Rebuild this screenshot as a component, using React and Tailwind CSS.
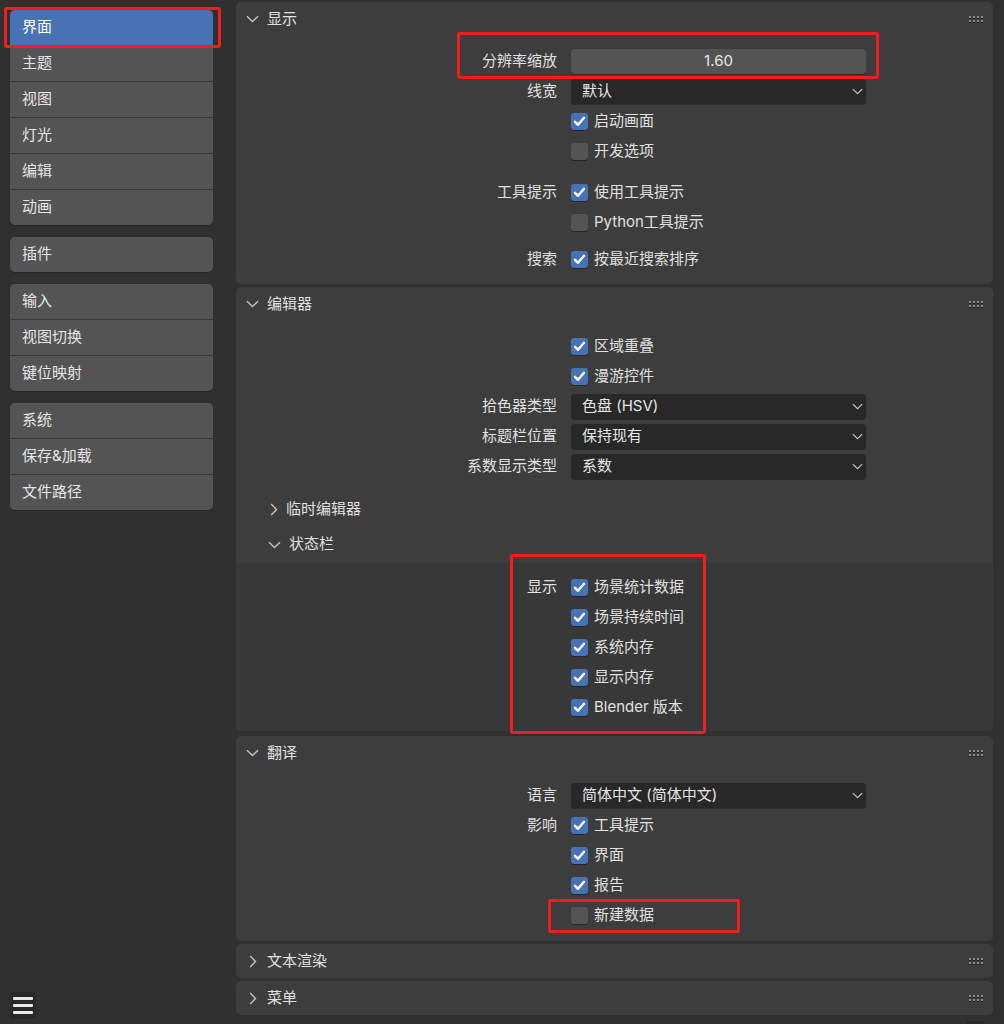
import React from 'react'

const font = { fontFamily: 'Inter, "Noto Sans CJK SC", sans-serif' }

const ChevronDown = ({ className }) => (
    <svg className={className} width="13" height="8" viewBox="0 0 13 8" fill="none">
        <path d="M1 1.2 L6.5 6.5 L12 1.2" stroke="#c4c4c4" strokeWidth="1.4" />
    </svg>
)

const ChevronRight = ({ className }) => (
    <svg className={className} width="8" height="13" viewBox="0 0 8 13" fill="none">
        <path d="M1.2 1 L6.5 6.5 L1.2 12" stroke="#c4c4c4" strokeWidth="1.4" />
    </svg>
)

const Grip = () => (
    <div className="grid grid-cols-4 gap-x-[2px] gap-y-[2px]">
        {[0, 1, 2, 3, 4, 5, 6, 7].map(i => (
            <span key={i} className="block w-[2px] h-[2px] bg-[#8c8c8c] shadow-[0_1px_0_#1e1e1e]"></span>
        ))}
    </div>
)

const Check = ({ on }) => (
    <span className={on ? "w-[17px] h-[17px] rounded-[3px] bg-[#4772b3] flex items-center justify-center shadow-[0_1px_0_#262626]" : "w-[17px] h-[17px] rounded-[3px] bg-[#545454] shadow-[0_1px_0_#262626]"}>
        {on && (
            <svg width="13" height="13" viewBox="0 0 13 13" fill="none">
                <path d="M2 6.8 L5 9.8 L11 2.8" stroke="#ffffff" strokeWidth="2.4" strokeLinecap="round" strokeLinejoin="round" />
            </svg>
        )}
    </span>
)

const Row = ({ label, children }) => (
    <div className="flex items-center h-[30px]">
        <div className="w-[321px] shrink-0 text-right text-[#e0e0e0]">{label}</div>
        <div className="ml-[14px] w-[295px]">{children}</div>
    </div>
)

const CheckRow = ({ label, text, on }) => (
    <Row label={label}>
        <div className="flex items-center gap-[6px]">
            <Check on={on} />
            <span className="text-[#e0e0e0]">{text}</span>
        </div>
    </Row>
)

const Dropdown = ({ label, value }) => (
    <Row label={label}>
        <div className="h-[25px] rounded-[4px] bg-[#282828] flex items-center justify-between pl-[11px] pr-[3px] text-[#e6e6e6] shadow-[0_1px_0_#2a2a2a]">
            <span>{value}</span>
            <ChevronDown className="w-[11px] h-[7px]" />
        </div>
    </Row>
)

const PanelHeader = ({ title, open }) => (
    <div className="h-[34px] flex items-center pl-[10px] pr-[10px]">
        {open ? <ChevronDown className="w-[13px] h-[8px] mr-[8px]" /> : <ChevronRight className="w-[8px] h-[13px] ml-[3px] mr-[10px]" />}
        <span className="text-[#e0e0e0]">{title}</span>
        <div className="ml-auto">
            <Grip />
        </div>
    </div>
)

const SubHeader = ({ title, open }) => (
    <div className="h-[35px] flex items-center pl-[32px]">
        {open ? <ChevronDown className="w-[13px] h-[8px] mr-[8px]" /> : <ChevronRight className="w-[8px] h-[13px] ml-[2px] mr-[8px]" />}
        <span className="text-[#e0e0e0]">{title}</span>
    </div>
)

const sideGroups = [
    ["界面", "主题", "视图", "灯光", "编辑", "动画"],
    ["插件"],
    ["输入", "视图切换", "键位映射"],
    ["系统", "保存&加载", "文件路径"],
]

const RedBox = ({ className }) => (
    <div className={"absolute border-[3px] border-[#f01e1e] rounded-[3px] pointer-events-none " + className}></div>
)

const App = () => {
    return (
        <div className="relative w-[1004px] h-[1024px] bg-[#303030] flex text-[15px] overflow-hidden" style={font}>
            <div className="w-[236px] shrink-0 flex flex-col pl-[10px] pr-[23px] pt-[10px]">
                {sideGroups.map((group, gi) => (
                    <div key={gi} className={gi === 0 ? "rounded-[5px] overflow-hidden bg-[#3a3a3a] flex flex-col gap-[1px] shadow-[0_1px_0_#262626]" : "mt-[12px] rounded-[5px] overflow-hidden bg-[#3a3a3a] flex flex-col gap-[1px] shadow-[0_1px_0_#262626]"}>
                        {group.map(item => (
                            <div key={item} className={item === "界面" ? "h-[35px] flex items-center pl-[12px] bg-[#4772b3] text-white" : "h-[35px] flex items-center pl-[12px] bg-[#545454] text-[#e6e6e6]"}>
                                {item}
                            </div>
                        ))}
                    </div>
                ))}
                <div className="mt-auto mb-[5px] w-[26px] h-[27px] rounded-[4px] bg-[#282828] flex flex-col items-center justify-center gap-[4px]">
                    <span className="block w-[20px] h-[3px] rounded-[1px] bg-[#e8e8e8]"></span>
                    <span className="block w-[20px] h-[3px] rounded-[1px] bg-[#e8e8e8]"></span>
                    <span className="block w-[20px] h-[3px] rounded-[1px] bg-[#e8e8e8]"></span>
                </div>
            </div>

            <div className="flex-1 pr-[11px] pt-[2px] flex flex-col gap-[3px]">
                {/* 显示 */}
                <div className="shrink-0 rounded-[5px] bg-[#3d3d3d] pb-[10px]">
                    <PanelHeader title="显示" open />
                    <div className="pt-[10px]">
                        <Row label="分辨率缩放">
                            <div className="h-[25px] rounded-[4px] bg-[#545454] flex items-center justify-center text-[#e6e6e6] shadow-[0_1px_0_#2a2a2a]">1.60</div>
                        </Row>
                        <Dropdown label="线宽" value="默认" />
                        <CheckRow text="启动画面" on />
                        <CheckRow text="开发选项" />
                        <div className="h-[11px]"></div>
                        <CheckRow label="工具提示" text="使用工具提示" on />
                        <CheckRow text="Python工具提示" />
                        <div className="h-[7px]"></div>
                        <CheckRow label="搜索" text="按最近搜索排序" on />
                    </div>
                </div>

                {/* 编辑器 */}
                <div className="shrink-0 rounded-[5px] bg-[#3d3d3d]">
                    <PanelHeader title="编辑器" open />
                    <div className="pt-[10px]">
                        <CheckRow text="区域重叠" on />
                        <CheckRow text="漫游控件" on />
                        <Dropdown label="拾色器类型" value="色盘 (HSV)" />
                        <Dropdown label="标题栏位置" value="保持现有" />
                        <Dropdown label="系数显示类型" value="系数" />
                    </div>
                    <div className="h-[11px]"></div>
                    <SubHeader title="临时编辑器" />
                    <SubHeader title="状态栏" open />
                    <div className="bg-[#383838] rounded-b-[5px] pt-[10px] pb-[9px]">
                        <CheckRow label="显示" text="场景统计数据" on />
                        <CheckRow text="场景持续时间" on />
                        <CheckRow text="系统内存" on />
                        <CheckRow text="显示内存" on />
                        <CheckRow text="Blender 版本" on />
                    </div>
                </div>

                {/* 翻译 */}
                <div className="shrink-0 mt-[2px] rounded-[5px] bg-[#3d3d3d] pb-[11px]">
                    <PanelHeader title="翻译" open />
                    <div className="pt-[10px]">
                        <Dropdown label="语言" value="简体中文 (简体中文)" />
                        <CheckRow label="影响" text="工具提示" on />
                        <CheckRow text="界面" on />
                        <CheckRow text="报告" on />
                        <CheckRow text="新建数据" />
                    </div>
                </div>

                <div className="shrink-0 rounded-[5px] bg-[#3d3d3d]">
                    <PanelHeader title="文本渲染" />
                </div>
                <div className="shrink-0 rounded-[5px] bg-[#3d3d3d]">
                    <PanelHeader title="菜单" />
                </div>
                <div className="shrink-0 flex justify-end pr-[8px] pt-[3px]">
                    <div className="w-[19px] h-[10px] rounded-t-[3px] bg-[#282828]"></div>
                </div>
            </div>

            <RedBox className="left-[4px] top-[7px] w-[217px] h-[41px]" />
            <RedBox className="left-[457px] top-[32px] w-[422px] h-[47px]" />
            <RedBox className="left-[510px] top-[554px] w-[196px] h-[180px]" />
            <RedBox className="left-[548px] top-[899px] w-[192px] h-[34px]" />
        </div>
    )
}

export default App
